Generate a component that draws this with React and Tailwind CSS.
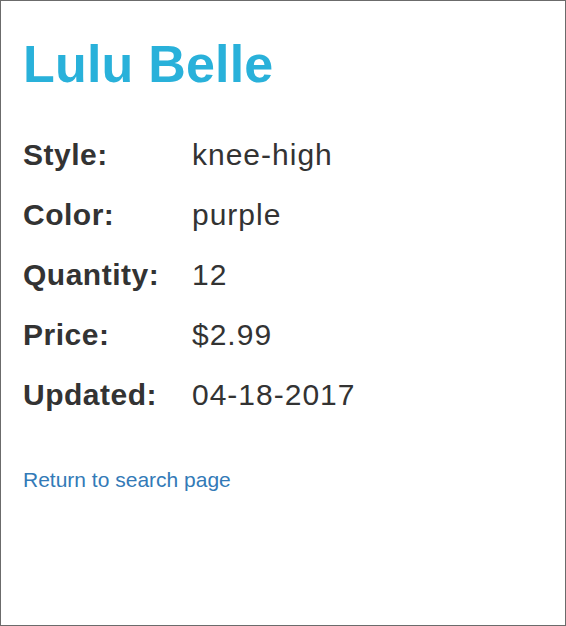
export default function App() {
  const rows = [
    ["Style:", "knee-high"],
    ["Color:", "purple"],
    ["Quantity:", "12"],
    ["Price:", "$2.99"],
    ["Updated:", "04-18-2017"],
  ];
  return (
    <div className="w-[566px] h-[626px] border border-[#6b6b6b] bg-white pl-[22px] pt-[37px] font-['Liberation_Sans',Arial,sans-serif] text-[#333333]">
      <h1 className="text-[52px] leading-[52px] font-bold tracking-[0.2px] text-[#29b1da]">Lulu Belle</h1>
      <div className="mt-[35px] grid grid-cols-[169px_1fr]">
        {rows.map(([k, v]) => (
          <div key={k} className="contents">
            <div className="text-[30px] leading-[60px] font-bold tracking-[0.5px]">{k}</div>
            <div className="text-[30px] leading-[60px] tracking-[1px]">{v}</div>
          </div>
        ))}
      </div>
      <a href="#" className="block mt-[44px] text-[21px] leading-[21px] text-[#337ab7]">
        Return to search page
      </a>
    </div>
  );
}
